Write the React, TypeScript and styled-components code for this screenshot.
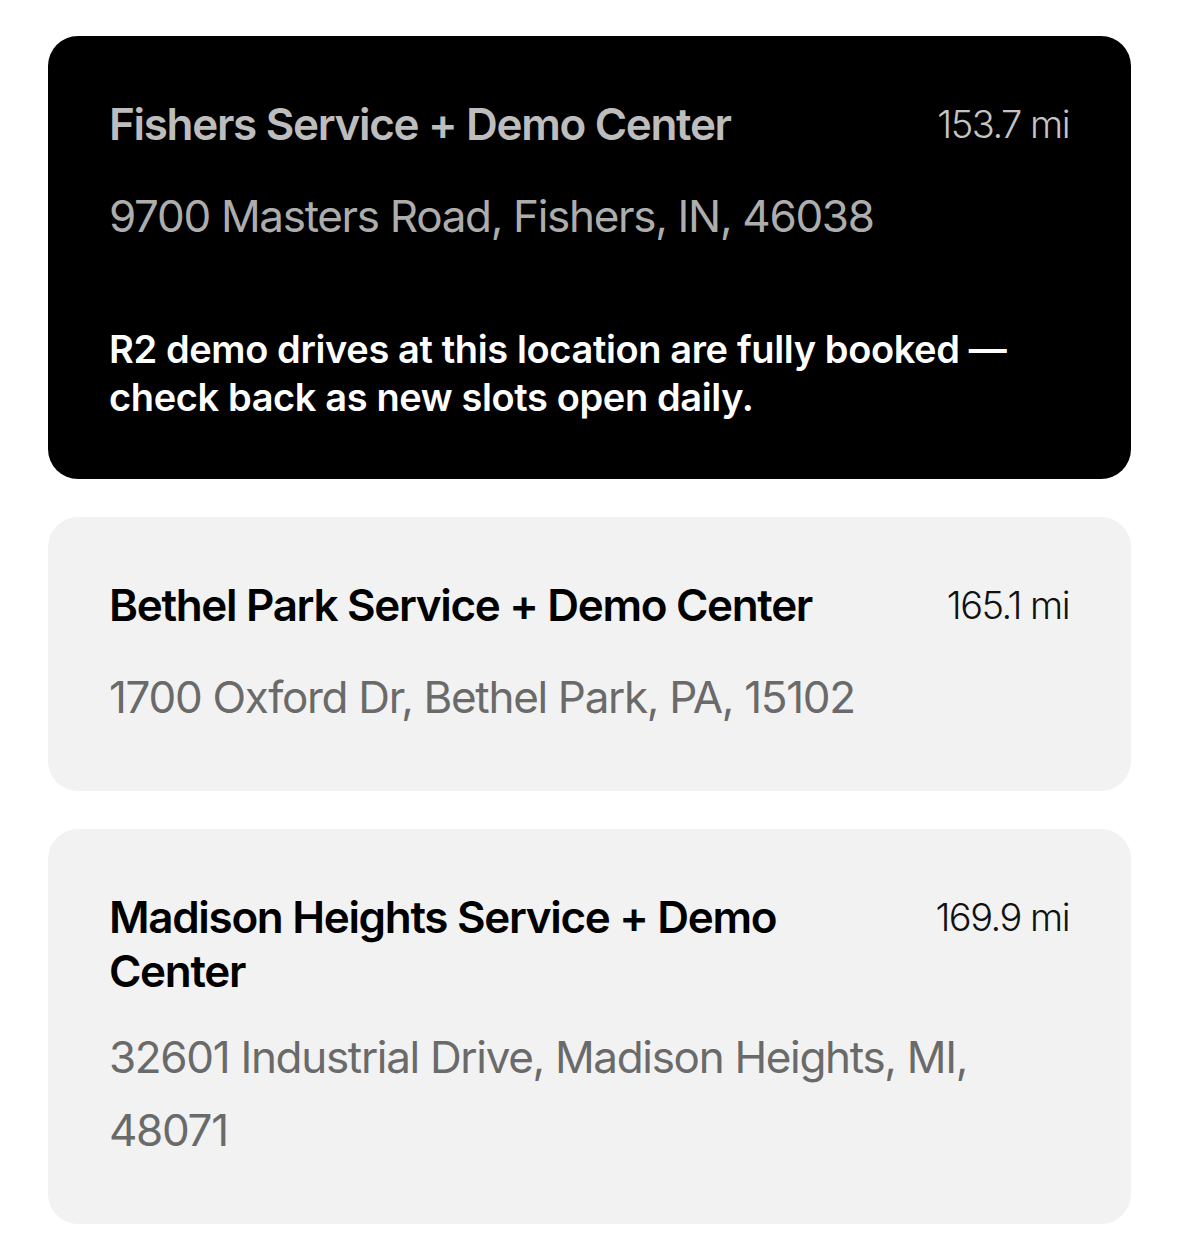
import React from 'react';
import styled, { createGlobalStyle } from 'styled-components';

const GlobalStyle = createGlobalStyle`
  html, body {
    margin: 0;
    padding: 0;
    background: #fff;
  }
  body {
    font-family: Inter, "Noto Sans", "Liberation Sans", sans-serif;
    -webkit-font-smoothing: antialiased;
  }
`

const Page = styled.main`
  padding: 36px 48px;
  display: flex;
  flex-direction: column;
  gap: 38px;
`

const Card = styled.section<{ $dark?: boolean }>`
  background: ${p => (p.$dark ? '#000' : '#f2f2f2')};
  border-radius: 30px;
  padding: 61px 62px 57px 61px;
  display: flex;
  flex-direction: column;
`

const Header = styled.div`
  display: flex;
  justify-content: space-between;
  align-items: flex-start;
  gap: 48px;
  min-height: 60px;
`

const Title = styled.h2<{ $dark?: boolean }>`
  margin: 0;
  font-size: 44px;
  line-height: 54px;
  font-weight: 600;
  letter-spacing: -0.03em;
  color: ${p => (p.$dark ? '#bdbdbd' : '#000')};
`

const Distance = styled.span<{ $dark?: boolean }>`
  flex-shrink: 0;
  font-size: 38px;
  line-height: 54px;
  font-weight: 300;
  letter-spacing: -0.04em;
  color: ${p => (p.$dark ? '#c4c4c4' : '#111')};
`

const Address = styled.p<{ $dark?: boolean }>`
  margin: 23px 0 0;
  font-size: 44px;
  line-height: 73px;
  font-weight: 400;
  letter-spacing: -0.03em;
  color: ${p => (p.$dark ? '#adadad' : '#6a6a6a')};
`

const Note = styled.p`
  margin: 72px 0 1px;
  font-size: 38px;
  line-height: 48px;
  font-weight: 600;
  letter-spacing: -0.01em;
  color: #fff;
`

type Location = {
  name: string;
  distance: string;
  address: string;
  note?: string;
  unavailable?: boolean;
}

const locations: Location[] = [
  {
    name: 'Fishers Service + Demo Center',
    distance: '153.7 mi',
    address: '9700 Masters Road, Fishers, IN, 46038',
    note: 'R2 demo drives at this location are fully booked — check back as new slots open daily.',
    unavailable: true,
  },
  {
    name: 'Bethel Park Service + Demo Center',
    distance: '165.1 mi',
    address: '1700 Oxford Dr, Bethel Park, PA, 15102',
  },
  {
    name: 'Madison Heights Service + Demo Center',
    distance: '169.9 mi',
    address: '32601 Industrial Drive, Madison Heights, MI, 48071',
  },
]

function App() {
  return (
    <>
      <GlobalStyle />
      <Page>
        {locations.map(loc => (
          <Card key={loc.name} $dark={loc.unavailable}>
            <Header>
              <Title $dark={loc.unavailable}>{loc.name}</Title>
              <Distance $dark={loc.unavailable}>{loc.distance}</Distance>
            </Header>
            <Address $dark={loc.unavailable}>{loc.address}</Address>
            {loc.note && <Note>{loc.note}</Note>}
          </Card>
        ))}
      </Page>
    </>
  )
}

export default App
